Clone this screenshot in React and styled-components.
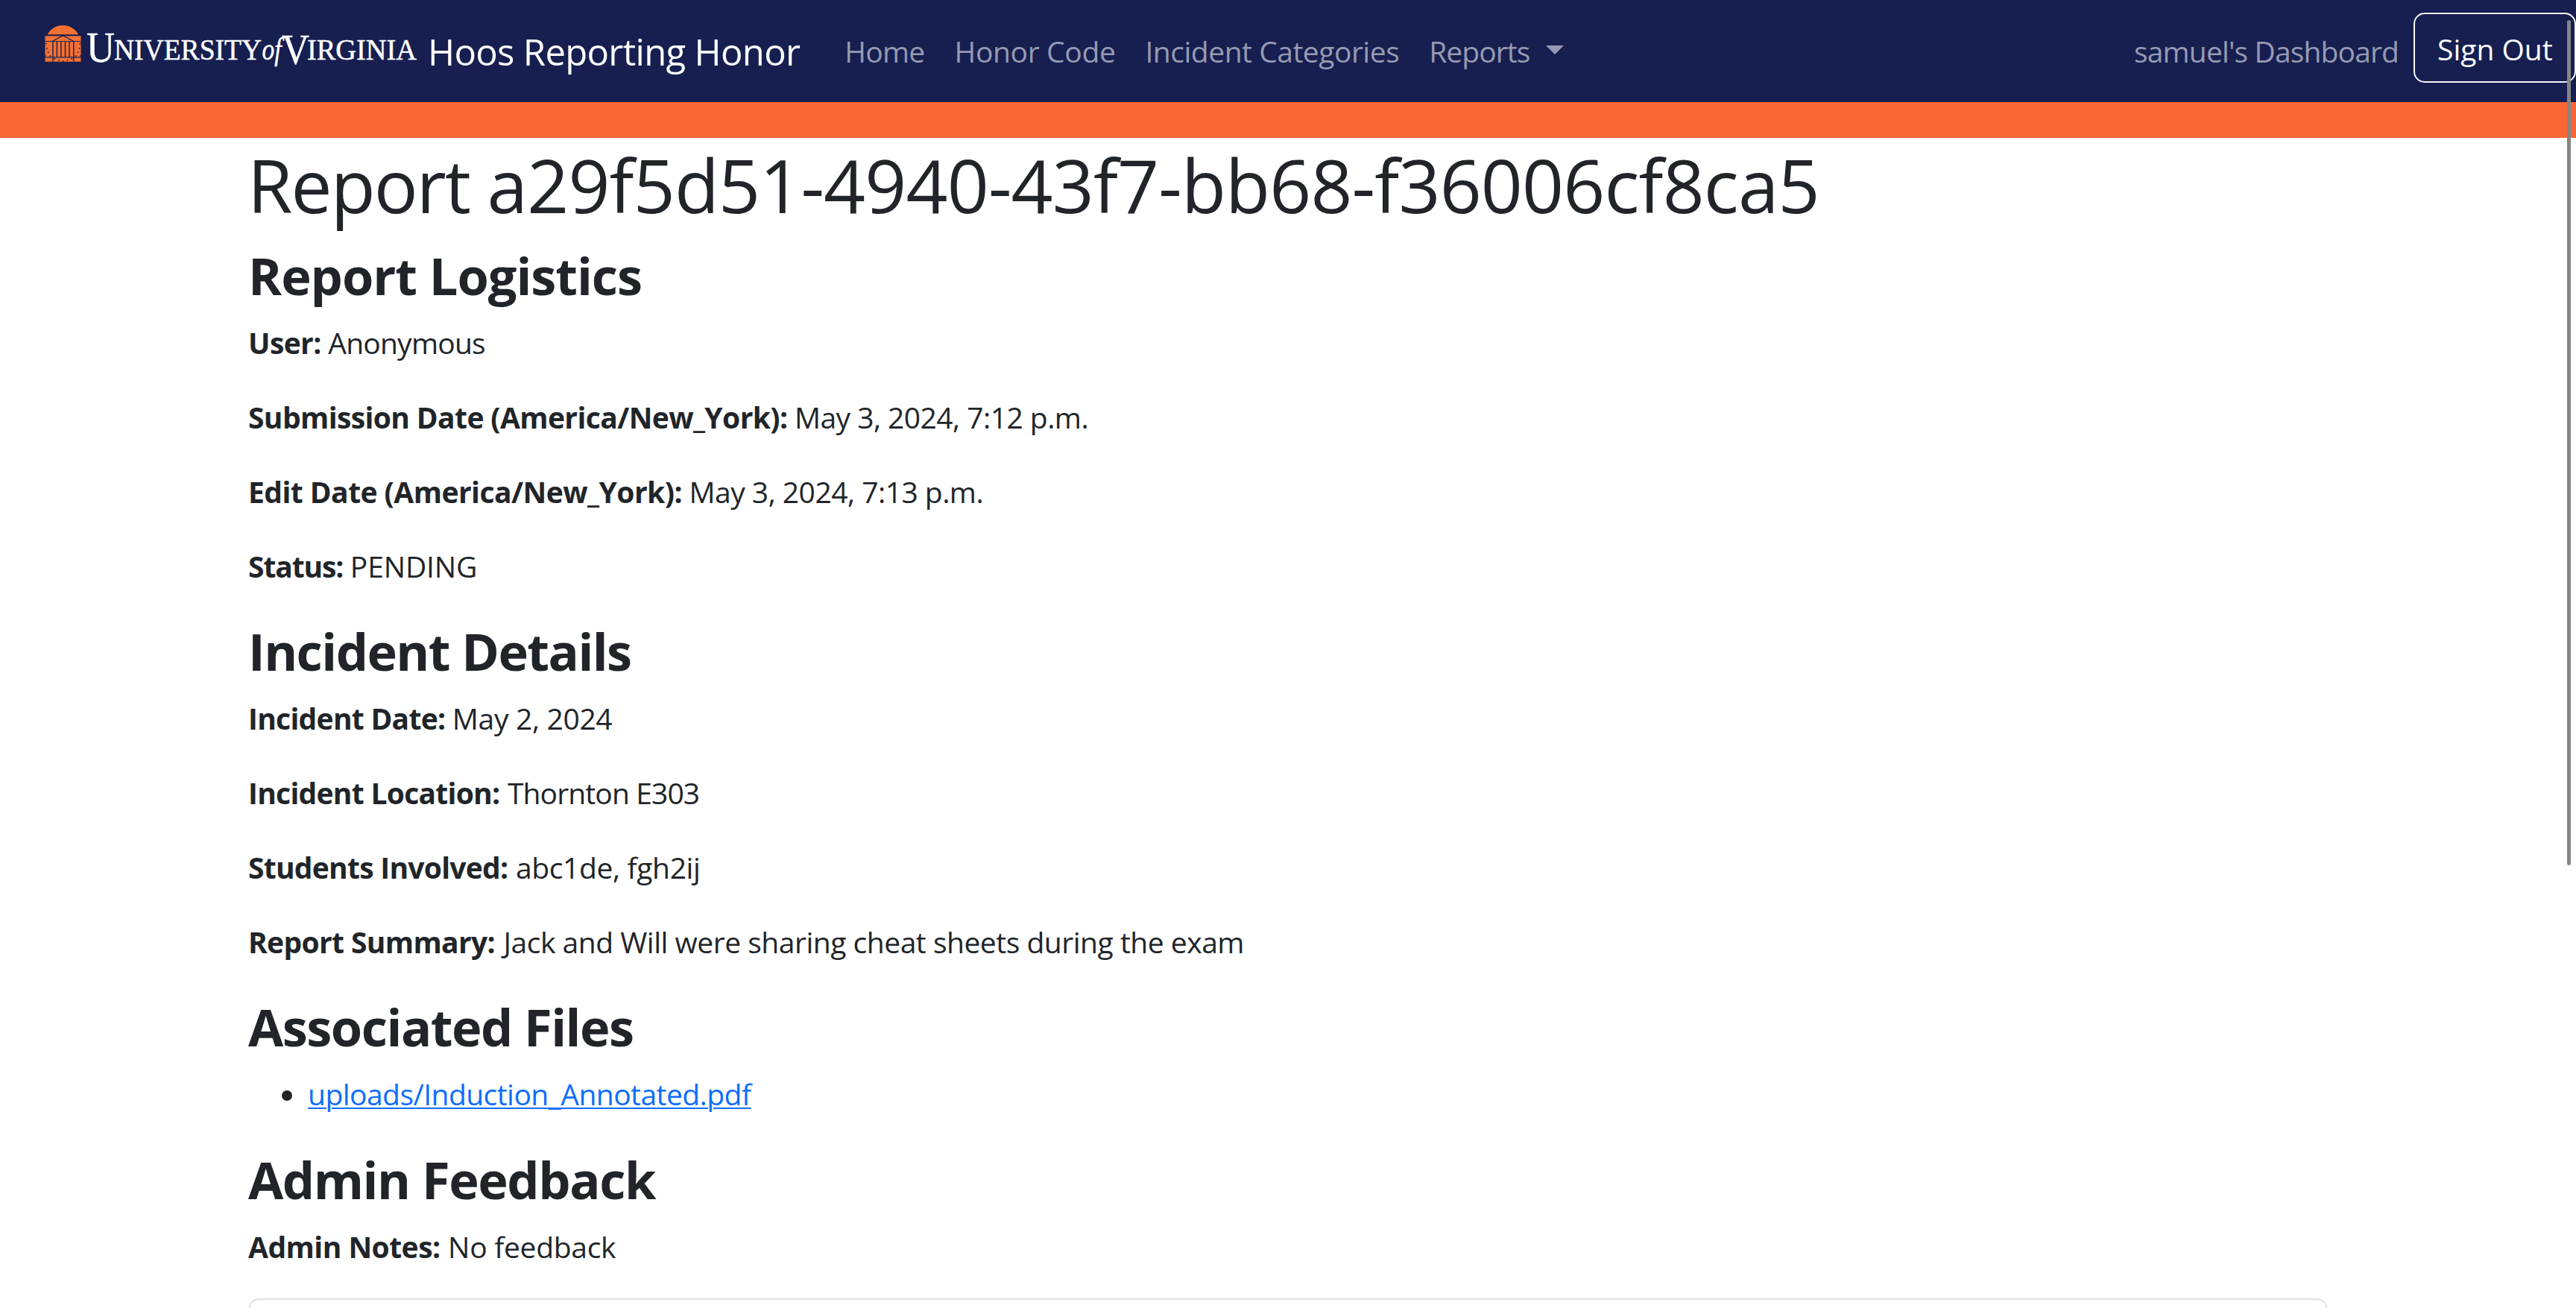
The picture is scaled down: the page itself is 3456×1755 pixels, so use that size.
import React from 'react';
import styled, { createGlobalStyle } from 'styled-components';

const GlobalStyle = createGlobalStyle`
  * { box-sizing: border-box; }
  html, body { margin: 0; padding: 0; overflow: hidden; }
  body {
    background: #fff;
    color: #212529;
    font-family: "Open Sans", "Noto Sans", sans-serif;
    font-size: 39px;
  }
`;

const Page = styled.div`
  position: relative;
  height: 1755px;
  overflow: hidden;
`;

const Navbar = styled.header`
  display: flex;
  align-items: flex-start;
  height: 137px;
  padding-left: 60px;
  background: #161f50;
`;

const OrangeBar = styled.div`
  height: 48px;
  background: #f96635;
`;

const Logo = styled.svg`
  display: block;
  flex: none;
  width: 502px;
  height: 90px;
  margin-top: 18px;
  overflow: visible;
`;

const Wordmark = styled.text`
  fill: #fff;
  stroke: #fff;
  stroke-width: 0.5px;
  font-family: "Liberation Serif", serif;
  font-size: ${(p) => p.$size}px;
  font-style: ${(p) => (p.$italic ? 'italic' : 'normal')};
`;

const Brand = styled.a`
  margin-left: 12px;
  padding-top: 32px;
  color: #fff;
  font-size: 49px;
  line-height: 75px;
  letter-spacing: -0.671px;
  white-space: nowrap;
`;

const NavLinks = styled.nav`
  display: flex;
  gap: 40px;
  margin-left: 60px;
  padding-top: 39px;
`;

const NavLink = styled.a`
  color: #969ab2;
  line-height: 60px;
  letter-spacing: ${(p) => p.$track}px;
  white-space: nowrap;
`;

const DropdownLink = styled(NavLink)`
  display: flex;

  &::after {
    content: "";
    margin: 22px 0 0 22px;
    width: 0;
    height: 0;
    border: 12px solid transparent;
    border-top-color: #969ab2;
    border-bottom: 0;
  }
`;

const Account = styled.div`
  display: flex;
  align-items: flex-start;
  gap: 20px;
  margin-left: auto;
`;

const DashboardLink = styled(NavLink)`
  padding-top: 39px;
`;

const SignOut = styled.button`
  width: 218px;
  height: 94px;
  margin: 17px 0 0;
  padding: 17px 0 13px 30px;
  border: 2px solid #f8f9fa;
  border-radius: 15px;
  background: transparent;
  color: #fff;
  font: inherit;
  line-height: 60px;
  letter-spacing: 0;
  text-align: left;
  white-space: nowrap;
`;

const Container = styled.main`
  width: 2790px;
  margin: 0 auto;
`;

const Title = styled.h1`
  margin: 0 0 20px -1px;
  padding-top: 6px;
  font-size: 98px;
  font-weight: 400;
  line-height: 114px;
  letter-spacing: -0.84px;
  white-space: nowrap;
`;

const TitleWord = styled.span`
  letter-spacing: -1.9px;
`;

const Heading = styled.h3`
  margin: 0 0 20px;
  padding-top: 5px;
  font-size: 68.5px;
  font-weight: 700;
  line-height: 79px;
  letter-spacing: ${(p) => p.$track}px;
`;

const Field = styled.p`
  display: flex;
  gap: ${(p) => p.$gap || 9.5}px;
  margin: 0 0 40px;
  padding-top: 2px;
  line-height: 58px;
  white-space: nowrap;
`;

const Label = styled.strong`
  font-weight: 700;
  letter-spacing: ${(p) => p.$track}px;
`;

const Value = styled.span`
  letter-spacing: ${(p) => p.$track}px;
`;

const FileList = styled.ul`
  margin: 0 0 41px;
  padding: 0;
  list-style: none;
`;

const FileItem = styled.li`
  display: flex;
  align-items: center;
  gap: 21px;
  height: 60px;
  padding: 2px 0 0 45px;
  line-height: 58px;

  &::before {
    content: "";
    width: 14px;
    height: 14px;
    margin-top: 4px;
    border-radius: 50%;
    background: #212529;
  }
`;

const FileLink = styled.a`
  color: #0d6efd;
  letter-spacing: -0.54px;
  text-decoration: underline;
  text-decoration-thickness: 2px;
  text-underline-offset: 3px;
`;

const Card = styled.section`
  height: 200px;
  border: 2px solid #dee0e3;
  border-radius: 15px;
`;

const ScrollThumb = styled.div`
  position: absolute;
  top: 27px;
  right: 7px;
  width: 5px;
  height: 1134px;
  border-radius: 3px;
  background: #858585;
`;

function UniversityLogo() {
  return (
    <Logo viewBox="60 18 502 90">
      <g fill="#f47133">
        <path d="M63.6 46.3 C68 38.5 75.5 34 84.4 34 C93.3 34 100.8 38.5 105.2 46.3 Z" />
        <path d="M60.5 48.2H108.5V82.8H60.5Z" />
      </g>
      <g stroke="#161f50" fill="none">
        <path strokeWidth="0.9" d="M60.5 55.5H108.5" />
        <path strokeWidth="1.3" d="M69.5 55.8L84.5 47.8L99.5 55.8" />
        <path strokeWidth="1.3" d="M60.5 76.8H108.5" />
        <path strokeWidth="1.4" d="M71 56V82.8M98.8 56V82.8M76.4 56V76.8M81.9 56V76.8M87.5 56V76.8M93 56V76.8" />
      </g>
      <g fill="#161f50">
        {[[62, 58.7], [63, 65], [64.7, 70], [67.4, 75], [61, 75], [107.3, 58.7], [106.6, 65], [104.7, 70], [102, 75], [108, 75], [73.5, 79], [96.3, 79], [79, 80.6], [90.5, 80.6], [84.8, 81.8]].map(([x, y]) => (
          <circle key={`${x}-${y}`} cx={x} cy={y} r="0.9" />
        ))}
      </g>
      <Wordmark x="116" y="82.8" $size={57} textLength="38" lengthAdjust="spacingAndGlyphs">U</Wordmark>
      <Wordmark x="153" y="80" $size={40.5} textLength="198" lengthAdjust="spacingAndGlyphs">NIVERSITY</Wordmark>
      <Wordmark x="351.5" y="80" $size={42} $italic textLength="26" lengthAdjust="spacingAndGlyphs">of</Wordmark>
      <Wordmark x="378" y="85.5" $size={57} textLength="37" lengthAdjust="spacingAndGlyphs">V</Wordmark>
      <Wordmark x="412" y="80" $size={40.5} textLength="147" lengthAdjust="spacingAndGlyphs">IRGINIA</Wordmark>
    </Logo>
  );
}

const logistics = [
  { label: 'User:', lt: -0.6, value: 'Anonymous', vt: -0.772 },
  { label: 'Submission Date (America/New_York):', lt: -0.61, value: 'May 3, 2024, 7:12 p.m.', vt: -0.54 },
  { label: 'Edit Date (America/New_York):', lt: -0.54, value: 'May 3, 2024, 7:13 p.m.', vt: -0.52 },
  { label: 'Status:', lt: -1.1, value: 'PENDING', vt: -0.15 },
];

const incident = [
  { label: 'Incident Date:', lt: -0.72, value: 'May 2, 2024', vt: -0.334 },
  { label: 'Incident Location:', lt: -0.724, value: 'Thornton E303', vt: -0.87, gap: 10.5 },
  { label: 'Students Involved:', lt: -0.737, value: 'abc1de, fgh2ij', vt: -0.36, gap: 10.5 },
  { label: 'Report Summary:', lt: -0.64, value: 'Jack and Will were sharing cheat sheets during the exam', vt: -0.48, gap: 11.5 },
];

const feedback = [{ label: 'Admin Notes:', lt: -0.523, value: 'No feedback', vt: -0.295, gap: 10.5 }];

const Fields = ({ items }) =>
  items.map((f) => (
    <Field key={f.label} $gap={f.gap}>
      <Label $track={f.lt}>{f.label}</Label>
      <Value $track={f.vt}>{f.value}</Value>
    </Field>
  ));

export default function App() {
  return (
    <Page>
      <GlobalStyle />
      <Navbar>
        <UniversityLogo />
        <Brand>Hoos Reporting Honor</Brand>
        <NavLinks>
          <NavLink $track={-0.774}>Home</NavLink>
          <NavLink $track={-0.35}>Honor Code</NavLink>
          <NavLink $track={-0.484}>Incident Categories</NavLink>
          <DropdownLink $track={-0.939}>Reports</DropdownLink>
        </NavLinks>
        <Account>
          <DashboardLink $track={-0.87}>samuel's Dashboard</DashboardLink>
          <SignOut>Sign Out</SignOut>
        </Account>
      </Navbar>
      <OrangeBar />
      <Container>
        <Title>
          <TitleWord>Report </TitleWord>a29f5d51-4940-43f7-bb68-f36006cf8ca5
        </Title>
        <Heading $track={-1.05}>Report Logistics</Heading>
        <Fields items={logistics} />
        <Heading $track={-1.546}>Incident Details</Heading>
        <Fields items={incident} />
        <Heading $track={-1.5}>Associated Files</Heading>
        <FileList>
          <FileItem>
            <FileLink>uploads/Induction_Annotated.pdf</FileLink>
          </FileItem>
        </FileList>
        <Heading $track={-1.42}>Admin Feedback</Heading>
        <Fields items={feedback} />
        <Card />
      </Container>
      <ScrollThumb />
    </Page>
  );
}
